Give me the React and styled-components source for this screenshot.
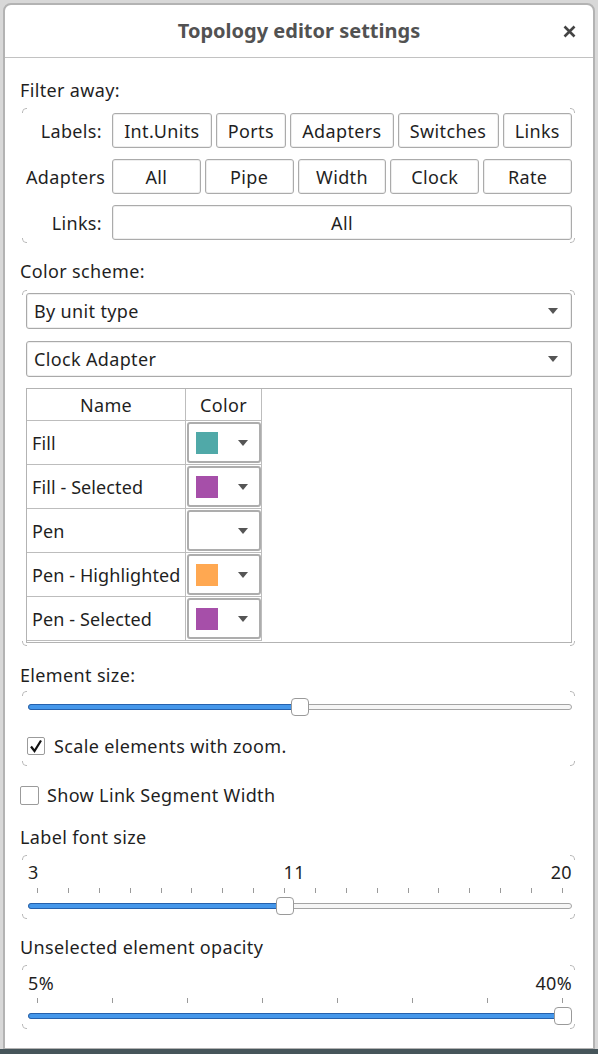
import React from 'react'
import styled, { createGlobalStyle } from 'styled-components'

const GlobalStyle = createGlobalStyle`
  html, body {
    margin: 0;
    padding: 0;
  }
  body {
    font-family: "Noto Sans", "Open Sans", sans-serif;
    background: #d4d4d4;
  }
`

const Page = styled.div`
  height: 1054px;
  box-sizing: border-box;
  padding: 3px 3px 0 3px;
  background: linear-gradient(to bottom, #d8d8d8 0, #d8d8d8 1049px, #46555a 1049px);
`

const Window = styled.div`
  box-sizing: border-box;
  height: 1046px;
  background: #fff;
  border: 2px solid #b3b3b3;
  border-bottom-width: 1px;
  border-radius: 8px 8px 0 0;
  display: flex;
  flex-direction: column;
  color: #1f1f1f;
  font-size: 18px;
  line-height: 20px;
  letter-spacing: 0.35px;
`

const TitleBar = styled.div`
  height: 52px;
  display: grid;
  grid-template-columns: 1fr auto 1fr;
  align-items: center;
  border-bottom: 1px solid #c2c2c2;
`

const Title = styled.div`
  grid-column: 2;
  font-size: 20px;
  font-weight: 700;
  letter-spacing: 0;
  color: #525252;
`

const CloseButton = styled.div`
  justify-self: end;
  margin-right: 17px;
  width: 13px;
  height: 13px;
  display: flex;
`

const Content = styled.div`
  display: flex;
  flex-direction: column;
  padding: 0 18px 0 15px;
`

const SectionLabel = styled.div`
  margin-top: ${(p) => p.$top}px;
  height: 20px;
  white-space: nowrap;
`

const Group = styled.div`
  position: relative;
  margin: ${(p) => p.$top}px 0 0 2px;
  border: 1px solid transparent;
  border-radius: 4px;
  padding: ${(p) => p.$pad};
  display: flex;
  flex-direction: column;

  &::before {
    content: '';
    position: absolute;
    inset: -1px;
    border: 1px solid #b8b8b8;
    border-radius: 4px;
    pointer-events: none;
    mask: linear-gradient(to right, #000 5px, transparent 5px calc(100% - 5px), #000 calc(100% - 5px)),
      linear-gradient(to bottom, #000 5px, transparent 5px calc(100% - 5px), #000 calc(100% - 5px));
    mask-composite: intersect;
  }
`

const FilterGrid = styled.div`
  display: grid;
  grid-template-columns: 76px 1fr;
  column-gap: 10px;
  row-gap: 11px;
  align-items: center;
`

const RowLabel = styled.div`
  text-align: right;
  white-space: nowrap;
`

const ButtonRow = styled.div`
  display: flex;
  gap: 4px;
`

const EqualRow = styled.div`
  display: grid;
  grid-template-columns: repeat(5, 1fr);
  gap: 4px;
`

const ToggleButton = styled.div`
  flex: 1 1 auto;
  height: 35px;
  box-sizing: border-box;
  padding: 0 9px;
  border: 1px solid #ababab;
  border-radius: 3px;
  box-shadow: inset 0 0 0 1px #eeeeee;
  background: #fff;
  display: flex;
  align-items: center;
  justify-content: center;
  white-space: nowrap;
`

const Combo = styled.div`
  height: 36px;
  box-sizing: border-box;
  margin-top: ${(p) => p.$top || 0}px;
  border: 1px solid #a9a9a9;
  border-radius: 3px;
  box-shadow: inset 0 0 0 1px #efefef;
  padding: 0 13px 0 7px;
  display: flex;
  align-items: center;
  justify-content: space-between;
`

const TableFrame = styled.div`
  margin-top: 11px;
  height: 255px;
  box-sizing: border-box;
  border: 1px solid #b3b3b3;
`

const TableGrid = styled.div`
  display: grid;
  grid-template-columns: 159px 76px;
  width: max-content;
`

const HeaderCell = styled.div`
  height: 32px;
  box-sizing: border-box;
  border-right: 1px solid #bdbdbd;
  border-bottom: 1px solid #bdbdbd;
  display: flex;
  align-items: center;
  justify-content: center;
`

const NameCell = styled.div`
  height: 44px;
  box-sizing: border-box;
  border-right: 1px solid #bdbdbd;
  border-bottom: 1px solid #bdbdbd;
  padding-left: 5px;
  display: flex;
  align-items: center;
  white-space: nowrap;
  letter-spacing: 0.1px;
`

const ColorCell = styled.div`
  height: 44px;
  box-sizing: border-box;
  border-right: 1px solid #bdbdbd;
  border-bottom: 1px solid #bdbdbd;
  padding: 1px 0 1px 1px;
`

const ColorButton = styled.div`
  height: 100%;
  box-sizing: border-box;
  border: 2px solid #adadad;
  border-radius: 3px;
  padding: 0 11px 0 7px;
  display: flex;
  align-items: center;
  justify-content: space-between;
`

const Swatch = styled.div`
  width: 22px;
  height: 22px;
  background: ${(p) => p.$color || 'transparent'};
`

const SliderBox = styled.div`
  position: relative;
  height: 20px;
  margin-left: 2px;
  display: flex;
  align-items: center;
`

const Rail = styled.div`
  flex: 1;
  height: 6px;
  box-sizing: border-box;
  border: 1px solid #a4a4a4;
  border-radius: 3px;
  background: #f6f6f6;
`

const Fill = styled.div`
  position: absolute;
  left: 0;
  top: 7px;
  height: 6px;
  box-sizing: border-box;
  border: 1px solid #2561ad;
  border-radius: 3px;
  background: #4597ea;
`

const Handle = styled.div`
  position: absolute;
  top: 1px;
  width: 18px;
  height: 18px;
  box-sizing: border-box;
  border: 1px solid #9a9a9a;
  border-radius: 4px;
  background: #fff;
`

const ScaleLabels = styled.div`
  position: relative;
  height: 20px;
  margin-left: 2px;
  display: flex;
  justify-content: space-between;
`

const MidLabel = styled.span`
  position: absolute;
  top: 0;
`

const Ticks = styled.div`
  margin: ${(p) => p.$top}px 0 0 2px;
  padding: 0 9px;
  height: 6px;
  display: flex;
  justify-content: space-between;
`

const Tick = styled.div`
  width: 1px;
  height: 5px;
  background: #9a9a9a;
`

const CheckRow = styled.div`
  margin: ${(p) => p.$top}px 0 0 ${(p) => p.$left}px;
  height: 20px;
  display: flex;
  align-items: center;
  gap: ${(p) => p.$gap}px;
  white-space: nowrap;
`

const CheckBox = styled.div`
  width: ${(p) => p.$size}px;
  height: ${(p) => p.$size}px;
  box-sizing: border-box;
  border: 1px solid #9b9b9b;
  border-radius: 2px;
  background: #fff;
  display: flex;
  align-items: center;
  justify-content: center;
`

const Arrow = () => (
  <svg width="10" height="6" viewBox="0 0 10 6">
    <path d="M0 0 L10 0 L5 6 Z" fill="#555" />
  </svg>
)

const Slider = ({ value, top = 0 }) => (
  <SliderBox style={{ marginTop: top }}>
    <Rail />
    <Fill style={{ width: `calc(${value} * (100% - 18px) + 9px)` }} />
    <Handle style={{ left: `calc(${value} * (100% - 18px))` }} />
  </SliderBox>
)

const colorRows = [
  { name: 'Fill', color: '#50a9a8' },
  { name: 'Fill - Selected', color: '#a64fa9' },
  { name: 'Pen', color: null },
  { name: 'Pen - Highlighted', color: '#ffa851' },
  { name: 'Pen - Selected', color: '#a64fa9' },
]

const App = () => (
  <Page>
    <GlobalStyle />
    <Window>
      <TitleBar>
        <Title>Topology editor settings</Title>
        <CloseButton>
          <svg width="13" height="13" viewBox="0 0 13 13">
            <path d="M1.5 1.5 L11.5 11.5 M11.5 1.5 L1.5 11.5" stroke="#444" strokeWidth="2.6" />
          </svg>
        </CloseButton>
      </TitleBar>

      <Content>
        <SectionLabel $top={22}>Filter away:</SectionLabel>
        <Group $top={8} $pad="4px 2px 2px 3px">
          <FilterGrid>
            <RowLabel>Labels:</RowLabel>
            <ButtonRow>
              {['Int.Units', 'Ports', 'Adapters', 'Switches', 'Links'].map((t) => (
                <ToggleButton key={t}>{t}</ToggleButton>
              ))}
            </ButtonRow>
            <RowLabel>Adapters</RowLabel>
            <EqualRow>
              {['All', 'Pipe', 'Width', 'Clock', 'Rate'].map((t) => (
                <ToggleButton key={t}>{t}</ToggleButton>
              ))}
            </EqualRow>
            <RowLabel>Links:</RowLabel>
            <ToggleButton>All</ToggleButton>
          </FilterGrid>
        </Group>

        <SectionLabel $top={18}>Color scheme:</SectionLabel>
        <Group $top={9} $pad="2px 2px 2px 3px">
          <Combo>
            By unit type
            <Arrow />
          </Combo>
          <Combo $top={12}>
            Clock Adapter
            <Arrow />
          </Combo>
          <TableFrame>
            <TableGrid>
              <HeaderCell>Name</HeaderCell>
              <HeaderCell>Color</HeaderCell>
              {colorRows.map((r) => (
                <React.Fragment key={r.name}>
                  <NameCell>{r.name}</NameCell>
                  <ColorCell>
                    <ColorButton>
                      <Swatch $color={r.color} />
                      <Arrow />
                    </ColorButton>
                  </ColorCell>
                </React.Fragment>
              ))}
            </TableGrid>
          </TableFrame>
        </Group>

        <SectionLabel $top={19}>Element size:</SectionLabel>
        <Group $top={6} $pad="5px 2px 9px 3px">
          <Slider value={0.5} />
          <CheckRow $top={19} $left={1} $gap={9}>
            <CheckBox $size={18}>
              <svg width="14" height="14" viewBox="0 0 14 14">
                <path d="M2 7.5 L5.5 12 L12 1.5" fill="none" stroke="#111" strokeWidth="2.2" />
              </svg>
            </CheckBox>
            Scale elements with zoom.
          </CheckRow>
        </Group>

        <CheckRow $top={19} $left={0} $gap={8}>
          <CheckBox $size={19} />
          Show Link Segment Width
        </CheckRow>

        <SectionLabel $top={22}>Label font size</SectionLabel>
        <Group $top={8} $pad="6px 2px 2px 3px">
          <ScaleLabels>
            <span>3</span>
            <MidLabel style={{ left: `calc(${8 / 17} * (100% - 18px) + 8px)` }}>11</MidLabel>
            <span>20</span>
          </ScaleLabels>
          <Ticks $top={6}>
            {Array.from({ length: 18 }, (_, i) => (
              <Tick key={i} />
            ))}
          </Ticks>
          <Slider value={8 / 17} top={2} />
        </Group>

        <SectionLabel $top={18}>Unselected element opacity</SectionLabel>
        <Group $top={8} $pad="7px 2px 2px 3px">
          <ScaleLabels>
            <span>5%</span>
            <span>40%</span>
          </ScaleLabels>
          <Ticks $top={5}>
            {Array.from({ length: 8 }, (_, i) => (
              <Tick key={i} />
            ))}
          </Ticks>
          <Slider value={1} top={2} />
        </Group>
      </Content>
    </Window>
  </Page>
)

export default App
